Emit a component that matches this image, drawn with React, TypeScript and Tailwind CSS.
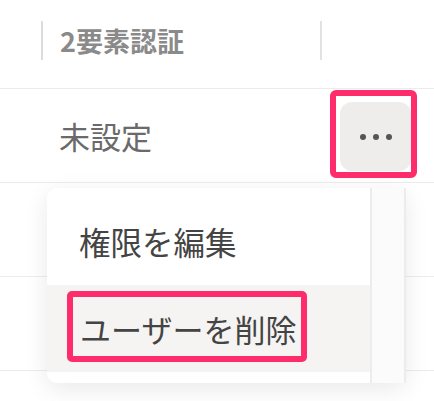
const rows = ['未設定', '', '', '']

export default function App() {
  return (
    <div
      className="relative w-[434px] h-[401px] overflow-hidden bg-white"
      style={{ fontFamily: '"Noto Sans CJK JP", "Noto Sans", sans-serif' }}
    >
      {/* ヘッダー */}
      <div className="h-[89px] border-b border-[#ececec] pt-[21px]">
        <div className="flex h-[39px] items-stretch">
          <div className="ml-[41px] w-[2px] bg-[#dcdcdc]" />
          <div className="flex w-[277px] items-center pl-[17px] text-[27px] font-bold leading-none text-[#8a8a8a]">
            2要素認証
          </div>
          <div className="w-[1.5px] bg-[#e2e2e2]" />
        </div>
      </div>

      {/* 行 */}
      {rows.map((r, i) => (
        <div key={i} className="flex h-[94px] items-center border-b border-[#ececec]">
          <div className="w-[315px] pl-[59px] text-[31px] leading-none text-[#6a6a6a]">{r}</div>
          {i === 0 && (
            <button className="ml-[25px] mt-[2px] flex h-[69px] w-[71px] items-center justify-center rounded-[12px] bg-[#eeedeb]">
              <span className="flex gap-[7px]">
                <span className="h-[6px] w-[6px] rounded-full bg-[#555]" />
                <span className="h-[6px] w-[6px] rounded-full bg-[#555]" />
                <span className="h-[6px] w-[6px] rounded-full bg-[#555]" />
              </span>
            </button>
          )}
        </div>
      ))}

      {/* メニュー */}
      <div className="absolute left-[47px] top-[188px] flex h-[195px] w-[359px] rounded-[10px] shadow-[0_6px_24px_rgba(0,0,0,0.09)]">
        <div className="w-[323px] rounded-[10px] bg-white py-[10px]">
          <div className="flex h-[87px] items-center pl-[32px] text-[31.5px] leading-none text-[#444]">
            権限を編集
          </div>
          <div className="flex h-[87px] items-center bg-[#f5f4f2] pl-[33px] text-[31px] leading-none text-[#444]">
            ユーザーを削除
          </div>
        </div>
        <div className="w-[36px] border-x-2 border-[#ececec] bg-[#fbfbfb]" />
      </div>

      {/* 注釈 */}
      <div className="absolute left-[330px] top-[90px] h-[88px] w-[87px] rounded-[6px] border-[6px] border-[#fe2c6b]" />
      <div className="absolute left-[67px] top-[291px] h-[71px] w-[240px] rounded-[5px] border-[6px] border-[#fe2c6b]" />
    </div>
  )
}
